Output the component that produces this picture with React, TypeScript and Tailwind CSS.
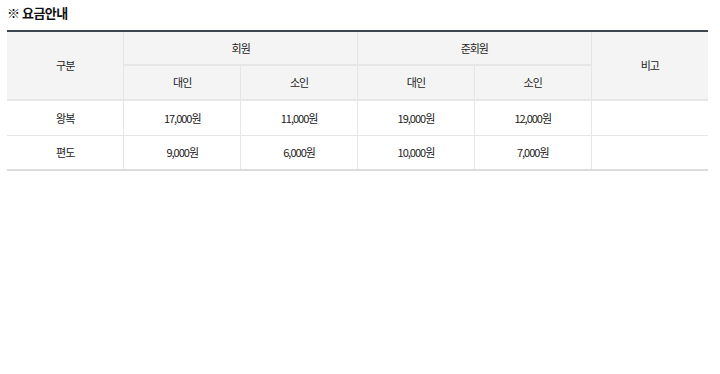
import React from "react";

const font = { fontFamily: '"Malgun Gothic", "Noto Sans CJK KR", "Noto Sans", sans-serif' };

const rows = [
  ["왕복", "17,000원", "11,000원", "19,000원", "12,000원", ""],
  ["편도", "9,000원", "6,000원", "10,000원", "7,000원", ""],
];

export default function App() {
  return (
    <div className="w-[720px] h-[374px] bg-white text-[#222]" style={font}>
      <div className="pl-[7px] pt-[5px]">
        <h3 className="text-[13px] font-bold leading-[16px] text-[#111] tracking-[-0.5px]">※ 요금안내</h3>
        <table className="mt-[9px] w-[701px] table-fixed border-collapse text-[11px] tracking-[-1px] text-center border-t-2 border-t-[#3d4650] border-b-2 border-b-[#dcdcdc]">
          <thead className="bg-[#f4f4f4] text-[#222]">
            <tr className="h-[34px]">
              <th rowSpan={2} className="font-normal border-b-2 border-[#e6e6e6] border-r border-r-[#e6e6e6]">구분</th>
              <th colSpan={2} className="font-normal border-r border-[#e6e6e6] border-b-2 border-b-[#e6e6e6]">회원</th>
              <th colSpan={2} className="font-normal border-r border-[#e6e6e6] border-b-2 border-b-[#e6e6e6]">준회원</th>
              <th rowSpan={2} className="font-normal border-b-2 border-[#e6e6e6]">비고</th>
            </tr>
            <tr className="h-[35px]">
              <th className="font-normal border-r border-[#e6e6e6] border-b-2 border-b-[#e6e6e6]">대인</th>
              <th className="font-normal border-r border-[#e6e6e6] border-b-2 border-b-[#e6e6e6]">소인</th>
              <th className="font-normal border-r border-[#e6e6e6] border-b-2 border-b-[#e6e6e6]">대인</th>
              <th className="font-normal border-r border-[#e6e6e6] border-b-2 border-b-[#e6e6e6]">소인</th>
            </tr>
          </thead>
          <tbody>
            {rows.map((r, i) => (
              <tr key={i} className={i === 0 ? "h-[35px] border-b border-[#e6e6e6]" : "h-[35px]"}>
                {r.map((c, j) => (
                  <td key={j} className={j < 5 ? "border-r border-[#e6e6e6]" : ""}>{c}</td>
                ))}
              </tr>
            ))}
          </tbody>
        </table>
      </div>
    </div>
  );
}
